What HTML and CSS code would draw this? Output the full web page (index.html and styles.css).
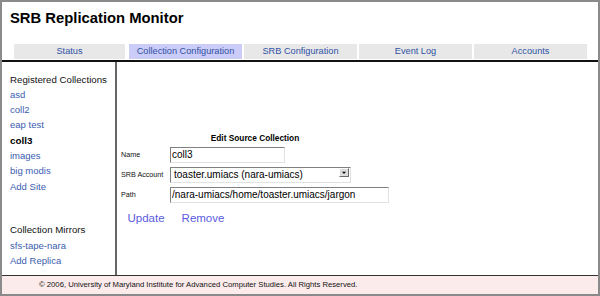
FILE: index.html
```html
<!DOCTYPE html>
<html lang="en">
<head>
<meta charset="utf-8">
<title>SRB Replication Monitor</title>
<link rel="stylesheet" href="styles.css">
</head>
<body>
<div class="page">
  <header class="masthead">
    <h1 class="title">SRB Replication Monitor</h1>
  </header>
  <nav class="tabs">
    <a class="tab" href="#">Status</a>
    <a class="tab active" href="#">Collection Configuration</a>
    <a class="tab" href="#">SRB Configuration</a>
    <a class="tab" href="#">Event Log</a>
    <a class="tab" href="#">Accounts</a>
  </nav>
  <div class="rule"></div>
  <div class="content">
    <aside class="sidebar">
      <div class="side-heading">Registered Collections</div>
      <a class="side-link" href="#">asd</a>
      <a class="side-link" href="#">coll2</a>
      <a class="side-link" href="#">eap test</a>
      <div class="side-current">coll3</div>
      <a class="side-link" href="#">images</a>
      <a class="side-link" href="#">big modis</a>
      <a class="side-link" href="#">Add Site</a>
      <div class="side-heading mirrors">Collection Mirrors</div>
      <a class="side-link" href="#">sfs-tape-nara</a>
      <a class="side-link" href="#">Add Replica</a>
    </aside>
    <main class="main">
      <form class="edit-form">
        <div class="form-title">Edit Source Collection</div>
        <label class="field-label">Name</label>
        <div class="field"><input class="text-input name-input" type="text" value="coll3"></div>
        <label class="field-label">SRB Account</label>
        <div class="field">
          <div class="select">
            <span class="select-text">toaster.umiacs (nara-umiacs)</span>
            <span class="select-btn">
              <svg width="10" height="9" viewBox="0 0 10 9"><path d="M2.5 3.5h5l-2.5 3z" fill="#000"/></svg>
            </span>
          </div>
        </div>
        <label class="field-label">Path</label>
        <div class="field"><input class="text-input path-input" type="text" value="/nara-umiacs/home/toaster.umiacs/jargon"></div>
      </form>
      <div class="actions">
        <a class="action" href="#">Update</a>
        <a class="action" href="#">Remove</a>
      </div>
    </main>
  </div>
  <footer class="footer">© 2006, University of Maryland Institute for Advanced Computer Studies. All Rights Reserved.</footer>
</div>
</body>
</html>
```
FILE: styles.css
```css
* { box-sizing: border-box; }
html, body { margin: 0; padding: 0; background: #fff; }
body { font-family: "Liberation Sans", Arial, Helvetica, sans-serif; color: #111; }

.page {
  width: 600px;
  height: 296px;
  border: 2px solid #8a8a8a;
  display: flex;
  flex-direction: column;
  overflow: hidden;
}

.masthead { padding: 8.6px 0 0 8px; }
.title {
  margin: 0;
  font-size: 14.8px;
  line-height: 15px;
  font-weight: bold;
  color: #000;
}

.tabs {
  margin-top: 18.4px;
  margin-left: 12px;
  display: flex;
  gap: 2px;
  height: 15px;
}
.tab {
  flex: 0 0 113px;
  background: #e8e8e8;
  color: #2f52a4;
  text-decoration: none;
  font-size: 9.2px;
  line-height: 15px;
  text-align: center;
}
.tab:first-child { flex-basis: 111px; margin-right: 2px; }
.tab.active { background: #ccccf8; }

.rule {
  margin: 1px -2px 0;
  height: 2px;
  background: #111;
}

.content {
  flex: 1;
  display: flex;
}

.sidebar {
  width: 115px;
  border-right: 2px solid #666;
  padding: 9.6px 0 0 8px;
  display: flex;
  flex-direction: column;
}
.side-heading {
  font-size: 9.7px;
  line-height: 15.3px;
  color: #111;
}
.side-heading.mirrors { margin-top: 28.3px; }
.side-link {
  font-size: 9.5px;
  line-height: 15.3px;
  color: #3a5db0;
  text-decoration: none;
}
.side-current {
  font-size: 9.8px;
  line-height: 15.3px;
  font-weight: bold;
  color: #000;
}

.main {
  flex: 1;
  padding: 69px 0 0 2px;
}

.edit-form {
  display: grid;
  grid-template-columns: 49px auto;
  width: max-content;
}
.form-title {
  grid-column: 1 / -1;
  text-align: center;
  font-size: 8.3px;
  font-weight: bold;
  line-height: 10px;
  padding: 2px;
  color: #000;
}
.field-label {
  align-self: center;
  padding: 0 2px;
  font-size: 7.2px;
  color: #111;
}
.field { padding: 2px; }

.text-input {
  display: block;
  height: 16px;
  margin: 0;
  padding: 0 1px;
  border: 1px solid;
  border-color: #808080 #e2e2e2 #e2e2e2 #808080;
  font-family: "Liberation Sans", Arial, sans-serif;
  font-size: 10px;
  color: #000;
  background: #fff;
  outline: none;
}
.name-input { width: 115px; }
.path-input { width: 219px; }

.select {
  width: 181px;
  height: 16px;
  border: 1px solid;
  border-color: #808080 #e2e2e2 #e2e2e2 #808080;
  display: flex;
  justify-content: space-between;
  align-items: flex-start;
  padding-left: 3px;
  background: #fff;
}
.select-text {
  font-size: 10px;
  line-height: 14px;
  color: #000;
}
.select-btn {
  width: 10px;
  height: 9px;
  margin: 0 1px 0 0;
  background: #dcdcdc;
  border: 1px solid;
  border-color: #fafafa #6a6a6a #6a6a6a #fafafa;
  display: flex;
  align-items: center;
  justify-content: center;
}
.select-btn svg { display: block; width: 8px; height: 7px; }

.actions {
  margin: 6px 0 0 8.5px;
  display: flex;
  gap: 17px;
}
.action {
  font-size: 11.5px;
  line-height: 14px;
  color: #5a5ae0;
  text-decoration: none;
}

.footer {
  border-top: 1px solid #333;
  background: #fcebeb;
  height: 19px;
  padding-left: 37px;
  font-size: 7.7px;
  line-height: 18px;
  color: #111;
}
```
